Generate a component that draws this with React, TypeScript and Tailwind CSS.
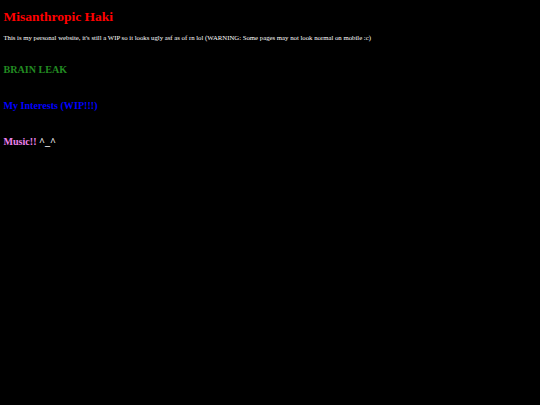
export default function App() {
  return (
    <div className="min-h-[405px] w-[540px] bg-black px-[3.4px] pt-[9px] text-white" style={{ fontFamily: '"Liberation Serif", serif' }}>
      <h1 className="text-[13.5px] font-bold leading-[15.5px] text-[#ff0000]">Misanthropic Haki</h1>
      <p className="mt-[9px] text-[6.75px] leading-[7.8px] text-white">
        This is my personal website, it's still a WIP so it looks ugly asf as of rn lol (WARNING: Some pages may not look normal on mobile :c)
      </p>
      <h2 className="mt-[23px] text-[10.125px] font-bold leading-[11.6px] text-[#228b22]">BRAIN LEAK</h2>
      <h2 className="mt-[24.5px] text-[10.125px] font-bold leading-[11.6px] text-[#0000ff]">My Interests (WIP!!!)</h2>
      <h2 className="mt-[24.5px] text-[10.125px] font-bold leading-[11.6px]">
        <span className="text-[#ee82ee]">Music!!</span> <span className="text-white">^_^</span>
      </h2>
    </div>
  );
}
